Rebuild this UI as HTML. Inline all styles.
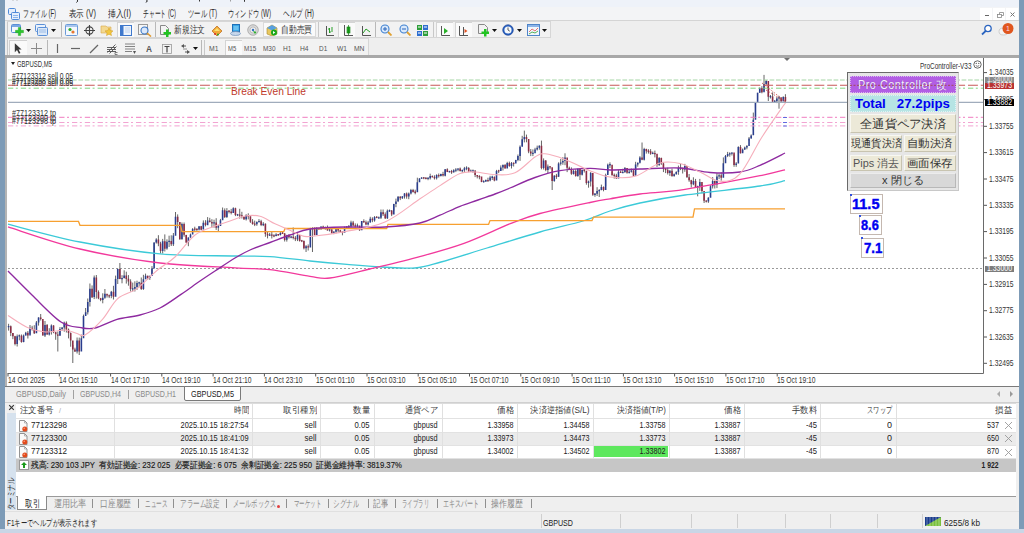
<!DOCTYPE html>
<html><head><meta charset="utf-8">
<style>
*{box-sizing:border-box;margin:0;padding:0}
html,body{width:1024px;height:533px;overflow:hidden;background:#f0f0f0;font-family:"Liberation Sans",sans-serif;color:#222}
body{position:relative}
.a{position:absolute}
.t{position:absolute;white-space:nowrap;line-height:1;transform-origin:0 50%}
#lstrip{left:0;top:0;width:5px;height:533px;background:#7d9bb7}
#rstrip{left:1018.5px;top:0;width:5.5px;height:533px;background:#7d9bb7}
#bstrip{left:0;top:529px;width:1024px;height:4px;background:#c9d6e6}
.m{font-size:10px;color:#2a2a2a}
.tf{font-size:7.5px;color:#555}
.ax{font-size:9px;color:#333}
.tl{font-size:9px;color:#333}
.hd{font-size:9px;color:#3a3a3a}
.cell{font-size:9px;color:#222}
.band{position:absolute;border:1px solid #d6d6d6;background:#f2f2f2}
.sep{position:absolute;width:1px;background:#c4c4c4}
.press{position:absolute;background:#fbfbfb;border:1px solid #e2e2e2}
.btn{position:absolute;background:#ece9d8;border:1px solid #f8f8f2;border-right-color:#c8c4b0;border-bottom-color:#c8c4b0}
.pt{position:absolute;font-size:11px;color:#333;white-space:nowrap;line-height:1;transform-origin:0 50%}
.box{position:absolute;background:#fff;border:1px solid #c4b8b0}
.bt{position:absolute;font-size:14.5px;font-weight:bold;-webkit-text-stroke:0.4px #0000f0;color:#0000f0;line-height:1;white-space:nowrap;transform-origin:0 50%}
</style></head><body>
<!-- title strip -->
<div class="a" style="left:5px;top:0;width:1014px;height:7px;background:#eef2f9"></div>
<svg class="a" style="left:0;top:0" width="260" height="4"><path d="M13 0v1M17 0v1" stroke="#bbb" stroke-width="1"/><path d="M77.5 0v1.5l-1 1M147 0v1.5l-1 1M199.5 0v1.5M244.5 0v1.8" stroke="#333" stroke-width="1"/><path d="M230.5 0v1.5" stroke="#888" stroke-width="0.8"/></svg>
<!-- menu -->
<div class="a" style="left:5px;top:7px;width:1014px;height:13px;background:#f3f4f6"></div>
<div class="a" style="left:5px;top:20px;width:1014px;height:1px;background:#d4d4d4"></div>
<svg class="a" style="left:8px;top:8px" width="12" height="12" viewBox="0 0 12 12"><rect x="0.5" y="0.5" width="7" height="6" rx="1" fill="#e4eefc" stroke="#4f8ad8"/><rect x="3.5" y="4.5" width="8" height="7" rx="1" fill="#e4eefc" stroke="#4f8ad8"/><path d="M5 7.5h5M5 9.5h5" stroke="#8ab4ec"/></svg>
<span class="t m" style="left:23px;top:9px;transform:scaleX(0.594)">ファイル (F)</span>
<span class="t m" style="left:69px;top:9px;transform:scaleX(0.748)">表示 (V)</span>
<span class="t m" style="left:108px;top:9px;transform:scaleX(0.781)">挿入(I)</span>
<span class="t m" style="left:143px;top:9px;transform:scaleX(0.582)">チャート (C)</span>
<span class="t m" style="left:188px;top:9px;transform:scaleX(0.637)">ツール (T)</span>
<span class="t m" style="left:228px;top:9px;transform:scaleX(0.624)">ウィンドウ (W)</span>
<span class="t m" style="left:283px;top:9px;transform:scaleX(0.664)">ヘルプ (H)</span>
<div class="a" style="left:980px;top:8px;width:12px;height:12px;background:#fff"></div>
<div class="a" style="left:993px;top:8px;width:12px;height:12px;background:#fff"></div>
<div class="a" style="left:1006px;top:8px;width:12px;height:12px;background:#fff"></div>
<div class="a" style="left:984.5px;top:14.5px;width:4px;height:1.2px;background:#666"></div>
<svg class="a" style="left:996.5px;top:11.5px" width="7" height="6"><rect x="0.5" y="2.5" width="4" height="3" fill="none" stroke="#888" stroke-width="0.8"/><path d="M2.5 2.5V0.5h4v3h-2" fill="none" stroke="#888" stroke-width="0.8"/></svg>
<svg class="a" style="left:1009.5px;top:11.5px" width="5" height="5"><path d="M0.5 0.5l4 4M4.5 0.5l-4 4" stroke="#777" stroke-width="1"/></svg>
<!-- toolbars -->
<div class="a" style="left:5px;top:21px;width:1014px;height:35px;background:#eeeeee"></div>
<div class="band" style="left:7px;top:21px;width:544px;height:17px"></div>
<div class="band" style="left:7px;top:38px;width:362px;height:18px"></div>
<div class="a" style="left:7px;top:22px;width:1px;height:15px;background:#c8c8c8"></div>
<svg class="a" style="left:11px;top:23px" width="14" height="14" viewBox="0 0 14 14"><rect x="0.5" y="1.5" width="9" height="8" rx="1" fill="#f4f8fd" stroke="#5a8fd6"/><rect x="1" y="2" width="8" height="2" fill="#7aa8e4"/><path d="M7.3 4.5h2.4v2.8h2.8v2.4H9.7v2.8H7.3V9.7H4.5V7.3h2.8z" fill="#2cc62c" stroke="#18a018" stroke-width="0.4"/></svg>
<svg class="a" style="left:26px;top:29px" width="5" height="3" viewBox="0 0 5 3"><path d="M0 0h5l-2.5 3z" fill="#111"/></svg>
<svg class="a" style="left:35px;top:23px" width="14" height="13" viewBox="0 0 14 13"><rect x="0.5" y="1.5" width="10" height="7" rx="1" fill="#eaf2fc" stroke="#5a8fd6"/><rect x="2.5" y="4.5" width="10" height="8" rx="1" fill="#dce9f8" stroke="#5a8fd6"/><path d="M4 7h7M4 9h7" stroke="#9bbbe6"/></svg>
<svg class="a" style="left:51px;top:29px" width="5" height="3" viewBox="0 0 5 3"><path d="M0 0h5l-2.5 3z" fill="#111"/></svg>
<div class="a" style="left:60.5px;top:22px;width:1px;height:15px;background:#b8b8b8"></div>
<svg class="a" style="left:65px;top:24px" width="13" height="12" viewBox="0 0 13 12"><rect x="0.5" y="0.5" width="12" height="11" rx="1" fill="#f4f8fd" stroke="#6a9ad8"/><rect x="1" y="1" width="11" height="2" fill="#a8c6ee"/><circle cx="5" cy="5.5" r="1.6" fill="#2aa82a"/><circle cx="8" cy="8" r="1.6" fill="#e87830"/></svg>
<svg class="a" style="left:84px;top:25px" width="11" height="11" viewBox="0 0 11 11"><circle cx="5.5" cy="5.5" r="3.6" fill="none" stroke="#444" stroke-width="1.1"/><path d="M5.5 0v11M0 5.5h11" stroke="#444" stroke-width="1.1"/></svg>
<svg class="a" style="left:100px;top:24px" width="14" height="12" viewBox="0 0 14 12"><path d="M1 2h5l1 1h4v6H1z" fill="#f3d890" stroke="#d8a848" stroke-width="0.6"/><path d="M9 4l1.2 2.6 2.8.3-2.1 1.9.6 2.8L9 10.2l-2.5 1.4.6-2.8-2.1-1.9 2.8-.3z" fill="#f2c840" stroke="#d09a20" stroke-width="0.5"/></svg>
<div class="a" style="left:117px;top:22px;width:17px;height:15px;background:#fafafa;border-top:1px solid #d4d4d4;border-left:1px solid #d4d4d4"></div>
<svg class="a" style="left:120px;top:25px" width="12" height="11" viewBox="0 0 12 11"><rect x="0.5" y="0.5" width="11" height="10" fill="#eef4fc" stroke="#3f78cc"/><rect x="0.5" y="0.5" width="3" height="10" fill="#3f78cc"/><path d="M5 3h5M5 5h5M5 7h5" stroke="#c0d4f0"/></svg>
<svg class="a" style="left:138px;top:24px" width="14" height="13" viewBox="0 0 14 13"><rect x="0.5" y="0.5" width="9" height="10" fill="#f6f6f6" stroke="#999"/><circle cx="6.5" cy="6.5" r="3.5" fill="#dbe8fa" stroke="#3a78c8" stroke-width="1.1"/><path d="M9 9l4 3.5" stroke="#e09a30" stroke-width="1.6"/></svg>
<div class="a" style="left:154.5px;top:22px;width:1px;height:15px;background:#b8b8b8"></div>
<svg class="a" style="left:160px;top:25px" width="12" height="12" viewBox="0 0 12 12"><path d="M0.5 0.5h5l3 3v6h-8z" fill="#f4f4f4" stroke="#888"/><path d="M6 4.5h2.5v2.5H11v2.5H8.5V12H6V9.5H3.5V7H6z" fill="#22c322"/></svg>
<span class="t m" style="left:174px;top:25px;color:#333;transform:scaleX(0.775)">新規注文</span>
<svg class="a" style="left:211px;top:25px" width="12" height="11" viewBox="0 0 12 11"><path d="M1 6L6 1l5 5-5 5z" fill="#f2a838" stroke="#b86818" stroke-width="0.7"/><path d="M3 6l3-3 3 3" fill="#f8e070"/><circle cx="4" cy="9" r="0.9" fill="#d02020"/><circle cx="7" cy="9.5" r="0.9" fill="#20a020"/></svg>
<svg class="a" style="left:230px;top:24px" width="11" height="12" viewBox="0 0 11 12"><rect x="2.5" y="0.5" width="7" height="7" fill="#38a8e8" stroke="#2070b8"/><path d="M3.5 3h5M3.5 5h5" stroke="#b8e8ff" stroke-width="0.8"/><ellipse cx="5.5" cy="9.5" rx="5" ry="2" fill="#c8d8ec" stroke="#7090b8" stroke-width="0.7"/></svg>
<svg class="a" style="left:247px;top:24px" width="12" height="12" viewBox="0 0 12 12"><circle cx="6" cy="6" r="5.3" fill="#d8d8d8" stroke="#999" stroke-width="0.7"/><circle cx="6" cy="6" r="3" fill="#eee" stroke="#aaa" stroke-width="0.6"/><circle cx="6" cy="6" r="1.2" fill="#3070c0"/><path d="M6 7l2 3 1.5-2z" fill="#28b028"/></svg>
<div class="a" style="left:263px;top:22px;width:53px;height:15px;background:#fafafa;border:1px solid #dadada"></div>
<svg class="a" style="left:266px;top:24px" width="12" height="12" viewBox="0 0 12 12"><path d="M1 4l5-3 5 3v6l-5 2-5-2z" fill="#e8c860" stroke="#a88828" stroke-width="0.6"/><path d="M1 4l5-3 5 3-5 2.5z" fill="#58a0e0"/><circle cx="8" cy="8.5" r="3" fill="#18a818"/><path d="M7 7v3l2.3-1.5z" fill="#fff"/></svg>
<span class="t m" style="left:281px;top:25px;color:#333;transform:scaleX(0.775)">自動売買</span>
<div class="a" style="left:318px;top:22px;width:1px;height:15px;background:#c8c8c8"></div>
<svg class="a" style="left:325px;top:26px" width="9" height="10" viewBox="0 0 9 10"><path d="M1.5 0v9.5H9" stroke="#555" fill="none"/><path d="M4.5 2v5M4.5 3h-1.5M4.5 6h1.5M7 1v5" stroke="#28a028" stroke-width="1"/></svg>
<div class="a" style="left:338px;top:22px;width:17px;height:15px;background:#fafafa;border-top:1px solid #d4d4d4;border-left:1px solid #d4d4d4"></div>
<svg class="a" style="left:343px;top:25px" width="10" height="11" viewBox="0 0 10 11"><path d="M1.5 0v10.5H10" stroke="#555" fill="none"/><rect x="4" y="2" width="3" height="6" fill="#28b028" stroke="#108010" stroke-width="0.6"/><path d="M5.5 0v10" stroke="#108010" stroke-width="0.7"/></svg>
<svg class="a" style="left:361px;top:26px" width="10" height="10" viewBox="0 0 10 10"><path d="M1.5 0v9.5H10" stroke="#555" fill="none"/><path d="M2 7l3-4 4 3" stroke="#28a028" fill="none" stroke-width="1"/></svg>
<div class="a" style="left:375px;top:22px;width:1px;height:15px;background:#b8b8b8"></div>
<svg class="a" style="left:380px;top:24px" width="12" height="12" viewBox="0 0 12 12"><circle cx="5" cy="5" r="4" fill="#d8e8fb" stroke="#3f80d0" stroke-width="1.1"/><path d="M3 5h4M5 3v4" stroke="#2a64b8" stroke-width="1"/><path d="M8 8l3.5 3.5" stroke="#e0a030" stroke-width="1.8"/></svg>
<svg class="a" style="left:399px;top:24px" width="12" height="12" viewBox="0 0 12 12"><circle cx="5" cy="5" r="4" fill="#d8e8fb" stroke="#3f80d0" stroke-width="1.1"/><path d="M3 5h4" stroke="#2a64b8" stroke-width="1"/><path d="M8 8l3.5 3.5" stroke="#e0a030" stroke-width="1.8"/></svg>
<svg class="a" style="left:417px;top:25px" width="11" height="11" viewBox="0 0 11 11"><rect x="0" y="0" width="5" height="5" fill="#2e9e3a"/><rect x="6" y="0" width="5" height="5" fill="#2f6fd0"/><rect x="0" y="6" width="5" height="5" fill="#2f6fd0"/><rect x="6" y="6" width="5" height="5" fill="#2e9e3a"/><path d="M1 2h3M7 2h3M1 8h3M7 8h3" stroke="#fff"/></svg>
<div class="a" style="left:433px;top:22px;width:1px;height:15px;background:#c8c8c8"></div>
<div class="a" style="left:436px;top:22px;width:17px;height:15px;background:#fafafa;border-top:1px solid #d4d4d4;border-left:1px solid #d4d4d4"></div>
<svg class="a" style="left:440px;top:26px" width="10" height="10" viewBox="0 0 10 10"><path d="M1.5 0v9.5H10" stroke="#555" fill="none"/><path d="M4 2v6l4-3z" fill="#28b028"/></svg>
<div class="a" style="left:455px;top:22px;width:17px;height:15px;background:#fafafa;border-top:1px solid #d4d4d4;border-left:1px solid #d4d4d4"></div>
<svg class="a" style="left:458px;top:26px" width="10" height="10" viewBox="0 0 10 10"><path d="M1.5 0v9.5H10M5.5 1v8" stroke="#555" fill="none"/><path d="M6.5 3v4l3-2z" fill="#e05020"/></svg>
<svg class="a" style="left:478px;top:24px" width="13" height="13" viewBox="0 0 13 13"><path d="M0.5 0.5h6l3 3v6h-9z" fill="#f2f2f2" stroke="#888"/><path d="M6 5h2.5v2.5H11V10H8.5v2.5H6V10H3.5V7.5H6z" fill="#22c322"/></svg>
<svg class="a" style="left:492px;top:29px" width="5" height="3" viewBox="0 0 5 3"><path d="M0 0h5l-2.5 3z" fill="#111"/></svg>
<svg class="a" style="left:502px;top:24px" width="12" height="12" viewBox="0 0 12 12"><circle cx="6" cy="6" r="5.3" fill="#2860c0" stroke="#1a4090" stroke-width="0.6"/><circle cx="6" cy="6" r="3.6" fill="#f4f8fc"/><path d="M6 3.5V6l1.8 1.2" stroke="#333" stroke-width="0.8" fill="none"/></svg>
<svg class="a" style="left:517px;top:29px" width="5" height="3" viewBox="0 0 5 3"><path d="M0 0h5l-2.5 3z" fill="#111"/></svg>
<svg class="a" style="left:527px;top:24px" width="13" height="12" viewBox="0 0 13 12"><rect x="0.5" y="0.5" width="12" height="11" fill="#f0f6fc" stroke="#4f84c8"/><rect x="1" y="1" width="11" height="2" fill="#8cb4e8"/><path d="M2 8l3-3 3 2 3-3" stroke="#e05050" fill="none" stroke-width="0.8"/><path d="M2 10l3-2 3 1 3-2" stroke="#30a030" fill="none" stroke-width="0.8"/></svg>
<svg class="a" style="left:542px;top:29px" width="5" height="3" viewBox="0 0 5 3"><path d="M0 0h5l-2.5 3z" fill="#111"/></svg>
<svg class="a" style="left:981px;top:24px" width="12" height="12" viewBox="0 0 12 12"><circle cx="7" cy="4.5" r="3.2" fill="#fff" stroke="#2a64c0" stroke-width="1.3"/><path d="M4.8 6.8L1 10.5" stroke="#2a64c0" stroke-width="1.8"/></svg>
<svg class="a" style="left:998px;top:22px" width="16" height="15" viewBox="0 0 16 15"><ellipse cx="5.5" cy="9.5" rx="4.5" ry="3.5" fill="#f4f4f4" stroke="#c4c4c4" stroke-width="0.8"/><circle cx="10" cy="6.5" r="5.5" fill="#e0561e"/><text x="10" y="9" font-size="7" fill="#fde" text-anchor="middle" font-family="Liberation Sans">1</text></svg>
<div class="a" style="left:7px;top:40px;width:1px;height:15px;background:#c8c8c8"></div>
<div class="a" style="left:9px;top:40px;width:18px;height:15px;background:#fafafa;border-top:1px solid #d0d0d0;border-left:1px solid #d0d0d0"></div>
<svg class="a" style="left:14px;top:43px" width="8" height="11" viewBox="0 0 8 11"><path d="M0.8 0.3v9l2.2-2.2 1.9 3.6 1.5-.8L4.6 6.4H7.6z" fill="#3a3a3a"/></svg>
<svg class="a" style="left:31px;top:43px" width="11" height="11" viewBox="0 0 11 11"><path d="M5.5 0v11M0 5.5h11" stroke="#8a8a8a" stroke-width="1"/></svg>
<div class="a" style="left:46.5px;top:40px;width:1px;height:15px;background:#b8b8b8"></div>
<svg class="a" style="left:56px;top:44px" width="3" height="9" viewBox="0 0 3 9"><path d="M1.5 0v9" stroke="#666" stroke-width="1.2"/></svg>
<svg class="a" style="left:71px;top:47px" width="10" height="3" viewBox="0 0 10 3"><path d="M0 1.5h9" stroke="#666" stroke-width="1.2"/></svg>
<svg class="a" style="left:89px;top:44px" width="10" height="10" viewBox="0 0 10 10"><path d="M1 9L9 1" stroke="#666" stroke-width="1.2"/></svg>
<svg class="a" style="left:106px;top:43px" width="12" height="12" viewBox="0 0 12 12"><path d="M1.5 9.5L9.5 1.5M3.5 10.5l7-7M1 4.5h9M1 6.5h9M1 8.5h9" stroke="#505050" stroke-width="0.9"/><path d="M9 9.5h2.5M9 11.5h2.5M9 9.5v2" stroke="#505050" stroke-width="0.7"/></svg>
<svg class="a" style="left:125px;top:43px" width="11" height="11" viewBox="0 0 11 11"><path d="M0 1h10M0 3.5h10M0 6h10M0 8.5h7" stroke="#777" stroke-width="0.9"/><path d="M8 8h3l-1.5 3z" fill="#555"/></svg>
<span class="t" style="left:145.5px;top:44.5px;font-size:9px;font-weight:bold;color:#555;transform:scaleX(0.923)">A</span>
<svg class="a" style="left:162px;top:43px" width="10" height="11" viewBox="0 0 10 11"><rect x="0.5" y="1.5" width="9" height="9" fill="none" stroke="#999" stroke-width="0.8"/><path d="M2.5 3.5h5M5 3.5v6" stroke="#444" stroke-width="1.2"/></svg>
<svg class="a" style="left:180px;top:44px" width="11" height="10" viewBox="0 0 11 10"><path d="M1 2l3-2v1.4h2v1.2H4V4z" fill="#555"/><path d="M10 8l-3 2V8.6H5V7.4h2V6z" fill="#555"/><path d="M3 5l4 0" stroke="#777" stroke-width="0.8"/></svg>
<svg class="a" style="left:193px;top:47px" width="5" height="3" viewBox="0 0 5 3"><path d="M0 0h5l-2.5 3z" fill="#111"/></svg>
<div class="a" style="left:201px;top:40px;width:1px;height:15px;background:#b8b8b8"></div>
<div class="a" style="left:203.5px;top:40px;width:1px;height:15px;background:#c8c8c8"></div>
<div class="a" style="left:224.5px;top:40px;width:17px;height:15px;background:#fafafa;border-top:1px solid #d4d4d4;border-left:1px solid #d4d4d4"></div>
<span class="t tf" style="left:209px;top:44.5px;transform:scaleX(0.912)">M1</span>
<span class="t tf" style="left:227.8px;top:44.5px;transform:scaleX(0.787)">M5</span>
<span class="t tf" style="left:244.3px;top:44.5px;transform:scaleX(0.843)">M15</span>
<span class="t tf" style="left:262.7px;top:44.5px;transform:scaleX(0.857)">M30</span>
<span class="t tf" style="left:282.6px;top:44.5px;transform:scaleX(0.876)">H1</span>
<span class="t tf" style="left:300px;top:44.5px;transform:scaleX(0.896)">H4</span>
<span class="t tf" style="left:318.8px;top:44.5px;transform:scaleX(0.855)">D1</span>
<span class="t tf" style="left:336.7px;top:44.5px;transform:scaleX(0.889)">W1</span>
<span class="t tf" style="left:353.8px;top:44.5px;transform:scaleX(0.900)">MN</span>
<!-- mdi border -->
<div class="a" style="left:5px;top:55px;width:1014px;height:3px;background:#a8a8a8"></div>
<!-- chart window -->
<div class="a" style="left:5px;top:58px;width:1014px;height:329px;background:#fff"></div>
<div class="a" style="left:5px;top:58px;width:2px;height:329px;background:#b4b4b4"></div>
<div class="a" style="left:5px;top:386px;width:1014px;height:1px;background:#7a7a7a"></div>
<svg class="a" style="left:0;top:0" width="1024" height="533">
<g shape-rendering="crispEdges">
<path d="M8 268.5H984" stroke="#9a9a9a" stroke-width="1" stroke-dasharray="2 2"/>
</g>
<path d="M8.60 323.8V330.6M10.74 325.5V336.1M12.88 333.0V339.2M15.02 335.8V345.4M17.16 334.5V346.5M19.30 334.5V340.3M21.44 334.5V342.7M23.58 334.5V342.3M25.72 331.8V335.5M27.86 331.0V338.5M30.00 325.0V334.0M32.14 325.8V330.5M34.28 325.2V334.0M36.42 321.0V326.5M38.56 317.3V325.6M40.70 314.0V320.5M42.84 321.0V335.5M44.98 321.0V337.0M47.12 324.0V334.8M49.26 328.2V335.5M51.40 324.4V334.6M53.54 325.2V333.2M55.68 331.9V339.8M57.82 331.5V351.5M59.96 327.1V335.5M62.10 327.1V330.8M64.24 321.6V331.7M66.38 321.4V332.5M68.52 328.5V338.4M70.66 332.4V346.7M72.80 345.0V363.0M74.94 347.7V352.0M77.08 337.5V353.5M79.22 337.6V355.0M81.36 334.6V340.0M83.50 314.6V320.0M85.64 308.0V314.5M87.78 298.5V314.5M89.92 283.5V306.5M92.06 285.4V298.0M94.20 275.5V299.1M96.34 275.0V298.6M98.48 290.4V299.2M100.62 297.9V301.2M102.76 293.3V303.3M104.90 289.0V298.8M107.04 294.5V297.6M109.18 294.5V298.1M111.32 290.9V298.2M113.46 285.8V299.5M115.60 275.6V284.5M117.74 268.8V284.0M119.88 263.0V279.2M122.02 275.2V283.3M124.16 270.3V278.5M126.30 271.7V283.6M128.44 275.1V285.7M130.58 279.3V291.5M132.72 282.6V291.5M134.86 281.3V291.5M137.00 280.7V289.9M139.14 281.7V287.3M141.28 277.5V289.9M143.42 274.8V289.9M145.56 273.6V279.4M147.70 275.7V279.6M149.84 275.5V279.9M151.98 266.1V274.5M154.12 242.4V263.5M156.26 238.2V243.6M158.40 235.2V246.2M160.54 241.8V253.5M162.68 238.9V253.5M164.82 234.4V251.5M166.96 239.3V249.7M169.10 235.7V247.0M171.24 235.3V246.0M173.38 233.0V246.0M175.52 212.0V233.0M177.66 214.4V228.2M179.80 222.5V239.7M181.94 222.5V239.5M184.08 222.5V236.7M186.22 234.8V243.0M188.36 237.4V246.2M190.50 233.6V237.8M192.64 228.1V232.1M194.78 226.7V232.1M196.92 228.3V231.1M199.06 226.3V230.5M201.20 225.9V230.3M203.34 220.4V229.3M205.48 220.2V226.4M207.62 217.1V223.5M209.76 217.8V222.5M211.90 219.2V227.6M214.04 219.7V227.7M216.18 218.2V229.9M218.32 225.0V231.1M220.46 218.9V221.8M222.60 207.5V218.0M224.74 208.4V218.0M226.88 208.1V218.0M229.02 210.3V213.4M231.16 208.9V214.4M233.30 207.3V213.0M235.44 207.7V216.1M237.58 213.9V216.1M239.72 208.8V218.6M241.86 211.8V218.5M244.00 216.5V220.0M246.14 214.2V220.5M248.28 213.3V219.4M250.42 216.5V222.9M252.56 219.1V224.7M254.70 220.6V226.1M256.84 221.3V225.8M258.98 219.1V222.3M261.12 219.8V226.1M263.26 222.1V226.1M265.40 223.4V236.8M267.54 231.5V238.4M269.68 232.9V236.0M271.82 232.0V238.5M273.96 234.3V237.2M276.10 233.2V236.3M278.24 234.1V235.7M280.38 232.0V235.5M282.52 231.7V234.0M284.66 233.0V241.5M286.80 234.8V241.6M288.94 234.2V238.6M291.08 236.0V238.3M293.22 227.5V239.4M295.36 236.1V241.1M297.50 232.9V241.1M299.64 235.5V241.6M301.78 239.9V242.1M303.92 240.4V249.4M306.06 245.1V252.0M308.20 244.4V250.5M310.34 227.8V236.5M312.48 227.3V252.0M314.62 227.3V235.4M316.76 227.1V231.1M318.90 227.8V229.5M321.04 226.5V230.0M323.18 225.7V228.6M325.32 226.6V229.7M327.46 225.5V230.6M329.60 228.5V231.5M331.74 228.8V233.9M333.88 231.0V234.2M336.02 228.5V233.4M338.16 228.3V232.3M340.30 229.8V232.3M342.44 231.6V235.3M344.58 226.6V228.5M346.72 226.0V228.4M348.86 225.0V228.2M351.00 220.7V227.5M353.14 220.9V226.4M355.28 223.4V227.5M357.42 223.6V227.4M359.56 226.5V230.8M361.70 221.0V225.5M363.84 219.3V222.9M365.98 220.5V225.3M368.12 220.9V225.5M370.26 216.8V222.5M372.40 217.3V222.2M374.54 216.1V221.7M376.68 216.1V218.2M378.82 216.5V218.7M380.96 209.5V219.0M383.10 209.5V216.0M385.24 212.4V219.0M387.38 209.5V219.0M389.52 209.5V211.9M391.66 210.1V216.1M393.80 203.8V210.5M395.94 198.6V207.2M398.08 196.1V202.1M400.22 196.1V200.1M402.36 196.3V198.9M404.50 193.1V198.6M406.64 192.5V198.7M408.78 192.5V199.2M410.92 188.9V194.5M413.06 188.9V192.6M415.20 189.7V194.3M417.34 177.7V189.9M419.48 178.2V180.5M421.62 177.2V178.8M423.76 177.1V179.2M425.90 177.1V179.4M428.04 177.2V180.2M430.18 173.7V179.5M432.32 175.4V177.5M434.46 175.3V179.5M436.60 174.3V179.5M438.74 173.5V177.6M440.88 173.7V176.5M443.02 171.8V176.5M445.16 169.1V176.4M447.30 168.3V172.1M449.44 170.8V172.5M451.58 169.9V173.9M453.72 169.2V172.7M455.86 168.1V172.1M458.00 168.3V171.2M460.14 167.5V171.5M462.28 169.5V172.7M464.42 166.9V172.2M466.56 166.3V170.3M468.70 167.1V172.2M470.84 169.5V172.0M472.98 169.5V172.8M475.12 170.0V177.1M477.26 175.2V178.4M479.40 175.2V179.3M481.54 179.5V182.2M483.68 180.2V182.6M485.82 179.5V182.0M487.96 177.7V181.8M490.10 175.8V181.3M492.24 175.7V180.0M494.38 176.3V181.3M496.52 169.9V176.2M498.66 169.8V173.1M500.80 165.4V170.5M502.94 164.4V170.5M505.08 164.0V168.5M507.22 161.8V166.8M509.36 161.6V166.8M511.50 162.0V168.5M513.64 162.5V166.5M515.78 159.8V161.2M517.92 154.5V161.2M520.06 145.4V160.9M522.20 135.8V146.1M524.34 130.6V142.4M526.48 134.6V142.3M528.62 143.3V153.2M530.76 149.0V156.1M532.90 149.4V156.1M535.04 147.8V150.5M537.18 145.6V150.5M539.32 145.3V149.7M541.46 140.6V169.3M543.60 158.4V169.5M545.74 160.1V171.2M547.88 164.5V173.1M550.02 166.0V169.3M552.16 173.9V190.0M554.30 175.1V181.8M556.44 173.9V178.9M558.58 162.3V176.8M560.72 158.9V165.5M562.86 157.2V164.8M565.00 153.3V165.2M567.14 162.5V172.1M569.28 166.6V169.7M571.42 167.4V174.8M573.56 169.6V174.6M575.70 169.2V176.7M577.84 168.3V176.8M579.98 168.3V180.0M582.12 169.7V175.5M584.26 168.3V172.5M586.40 172.0V184.7M588.54 180.6V187.7M590.68 172.0V186.5M592.82 185.2V195.9M594.96 193.2V196.8M597.10 187.2V196.0M599.24 189.1V197.0M601.38 184.6V190.3M603.52 186.4V191.3M605.66 173.7V186.2M607.80 163.6V172.5M609.94 162.3V168.0M612.08 172.0V175.5M614.22 173.5V178.6M616.36 173.8V178.6M618.50 169.8V176.8M620.64 170.5V173.0M622.78 168.8V173.0M624.92 167.0V173.0M627.06 168.3V173.7M629.20 169.9V173.6M631.34 168.5V172.6M633.48 168.9V176.8M635.62 161.8V171.2M637.76 162.5V166.7M639.90 156.2V163.5M642.04 142.5V160.2M644.18 147.8V160.5M646.32 148.7V153.6M648.46 149.2V153.6M650.60 149.1V154.8M652.74 151.5V154.2M654.88 150.6V157.4M657.02 157.0V166.9M659.16 157.0V166.0M661.30 157.6V164.9M663.44 162.5V172.1M665.58 168.1V173.1M667.72 167.7V174.5M669.86 170.1V175.9M672.00 168.6V176.8M674.14 173.5V176.8M676.28 171.2V174.6M678.42 165.6V174.8M680.56 163.9V170.1M682.70 167.7V173.5M684.84 163.9V171.8M686.98 171.5V178.0M689.12 174.0V181.8M691.26 179.8V187.5M693.40 177.3V185.2M695.54 178.9V187.7M697.68 185.7V196.3M699.82 178.9V190.9M701.96 184.5V193.3M704.10 192.0V203.0M706.24 200.3V202.5M708.38 197.2V202.9M710.52 185.1V194.9M712.66 177.1V188.5M714.80 180.6V188.5M716.94 173.3V188.1M719.08 173.7V179.1M721.22 172.3V180.7M723.36 157.4V172.5M725.50 155.0V157.5M727.64 151.9V157.1M729.78 152.3V156.7M731.92 152.4V155.5M734.06 154.5V166.8M736.20 162.1V166.8M738.34 146.3V161.2M740.48 145.1V153.5M742.62 148.5V151.8M744.76 146.6V150.0M746.90 145.1V149.3M749.04 137.0V140.5M751.18 134.4V138.5M753.32 112.6V130.3M755.46 102.0V107.8M757.60 92.8V93.7M759.74 87.4V92.9M761.88 86.2V93.3M764.02 74.9V90.9M766.16 80.0V85.0M768.30 89.9V101.0M770.44 95.0V98.5M772.58 92.4V102.6M774.72 100.0V102.8M776.86 96.9V103.1M779.00 95.9V108.7M781.14 97.3V101.7M783.28 96.3V99.3M785.42 94.2V101.9" stroke="#555" stroke-width="0.9" fill="none"/>
<path d="M7.80 325.9h1.6v1.3h-1.6zM16.36 336.2h1.6v7.8h-1.6zM18.50 335.3h1.6v1.3h-1.6zM22.78 335.4h1.6v6.7h-1.6zM24.92 332.7h1.6v2.8h-1.6zM29.20 327.7h1.6v7.7h-1.6zM35.62 322.4h1.6v10.8h-1.6zM37.76 317.6h1.6v4.8h-1.6zM44.18 324.9h1.6v10.7h-1.6zM48.46 331.0h1.6v3.5h-1.6zM50.60 325.6h1.6v5.4h-1.6zM59.16 329.0h1.6v6.7h-1.6zM61.30 327.6h1.6v1.4h-1.6zM63.44 322.7h1.6v4.9h-1.6zM76.28 340.5h1.6v11.1h-1.6zM80.56 338.2h1.6v13.3h-1.6zM82.70 316.1h1.6v22.1h-1.6zM84.84 312.3h1.6v3.8h-1.6zM86.98 302.1h1.6v10.2h-1.6zM89.12 288.7h1.6v13.4h-1.6zM93.40 277.4h1.6v19.7h-1.6zM101.96 297.7h1.6v2.3h-1.6zM104.10 293.8h1.6v4.0h-1.6zM110.52 291.7h1.6v4.4h-1.6zM114.80 278.9h1.6v17.9h-1.6zM116.94 268.9h1.6v10.0h-1.6zM121.22 277.9h1.6v1.3h-1.6zM123.36 275.6h1.6v2.5h-1.6zM131.92 288.3h1.6v1.3h-1.6zM134.06 286.9h1.6v1.9h-1.6zM136.20 283.0h1.6v3.9h-1.6zM138.34 282.2h1.6v1.3h-1.6zM142.62 279.2h1.6v9.7h-1.6zM144.76 275.8h1.6v3.3h-1.6zM149.04 276.1h1.6v1.9h-1.6zM151.18 268.5h1.6v7.6h-1.6zM153.32 242.5h1.6v26.0h-1.6zM155.46 239.5h1.6v3.0h-1.6zM161.88 241.2h1.6v9.9h-1.6zM166.16 241.7h1.6v6.9h-1.6zM168.30 240.7h1.6v1.3h-1.6zM172.58 235.6h1.6v8.7h-1.6zM174.72 216.7h1.6v19.0h-1.6zM181.14 223.9h1.6v15.4h-1.6zM187.56 237.5h1.6v4.8h-1.6zM189.70 234.4h1.6v3.1h-1.6zM191.84 229.1h1.6v5.3h-1.6zM198.26 226.3h1.6v3.2h-1.6zM202.54 222.7h1.6v6.9h-1.6zM206.82 220.6h1.6v4.6h-1.6zM213.24 222.3h1.6v1.3h-1.6zM217.52 225.9h1.6v1.8h-1.6zM219.66 220.2h1.6v5.8h-1.6zM221.80 210.2h1.6v10.0h-1.6zM226.08 211.1h1.6v5.9h-1.6zM232.50 208.3h1.6v4.6h-1.6zM236.78 214.3h1.6v1.3h-1.6zM245.34 215.3h1.6v4.0h-1.6zM256.04 221.9h1.6v2.3h-1.6zM258.18 221.0h1.6v1.3h-1.6zM262.46 223.8h1.6v1.4h-1.6zM268.88 234.4h1.6v1.3h-1.6zM275.30 234.4h1.6v1.7h-1.6zM279.58 233.0h1.6v2.1h-1.6zM286.00 235.5h1.6v4.3h-1.6zM290.28 236.4h1.6v1.3h-1.6zM296.70 234.9h1.6v4.5h-1.6zM305.26 246.3h1.6v2.0h-1.6zM309.54 229.0h1.6v18.6h-1.6zM311.68 227.9h1.6v1.3h-1.6zM315.96 228.3h1.6v6.8h-1.6zM320.24 226.6h1.6v2.5h-1.6zM324.52 226.9h1.6v1.4h-1.6zM328.80 229.3h1.6v1.3h-1.6zM333.08 231.8h1.6v1.3h-1.6zM335.22 229.2h1.6v2.6h-1.6zM343.78 227.4h1.6v5.3h-1.6zM345.92 226.5h1.6v1.3h-1.6zM348.06 226.0h1.6v1.3h-1.6zM350.20 222.6h1.6v3.9h-1.6zM356.62 225.2h1.6v1.3h-1.6zM360.90 221.0h1.6v9.2h-1.6zM367.32 222.4h1.6v2.0h-1.6zM369.46 218.7h1.6v3.7h-1.6zM373.74 216.9h1.6v3.5h-1.6zM378.02 217.2h1.6v1.3h-1.6zM380.16 212.2h1.6v5.5h-1.6zM386.58 210.8h1.6v7.4h-1.6zM388.72 210.1h1.6v1.3h-1.6zM393.00 204.1h1.6v10.4h-1.6zM395.14 201.4h1.6v2.7h-1.6zM397.28 196.8h1.6v4.5h-1.6zM401.56 196.3h1.6v1.9h-1.6zM403.70 193.6h1.6v2.8h-1.6zM407.98 193.6h1.6v2.8h-1.6zM410.12 189.9h1.6v3.7h-1.6zM416.54 182.3h1.6v10.0h-1.6zM418.68 178.4h1.6v3.9h-1.6zM420.82 177.5h1.6v1.3h-1.6zM427.24 177.8h1.6v1.3h-1.6zM429.38 175.9h1.6v2.4h-1.6zM435.80 174.9h1.6v3.3h-1.6zM440.08 174.1h1.6v2.0h-1.6zM444.36 169.3h1.6v6.4h-1.6zM448.64 171.0h1.6v1.3h-1.6zM452.92 170.3h1.6v1.9h-1.6zM455.06 169.4h1.6v1.3h-1.6zM457.20 168.5h1.6v1.3h-1.6zM461.48 170.0h1.6v1.3h-1.6zM463.62 168.3h1.6v1.9h-1.6zM465.76 167.5h1.6v1.3h-1.6zM470.04 170.5h1.6v1.3h-1.6zM472.18 170.2h1.6v1.3h-1.6zM482.88 180.9h1.6v1.3h-1.6zM485.02 180.1h1.6v1.3h-1.6zM489.30 177.6h1.6v3.0h-1.6zM491.44 176.6h1.6v1.3h-1.6zM495.72 170.9h1.6v9.6h-1.6zM500.00 167.6h1.6v3.5h-1.6zM502.14 165.1h1.6v2.5h-1.6zM506.42 163.1h1.6v5.4h-1.6zM510.70 163.3h1.6v2.6h-1.6zM514.98 160.0h1.6v3.5h-1.6zM517.12 155.9h1.6v4.1h-1.6zM519.26 146.8h1.6v9.1h-1.6zM521.40 139.3h1.6v7.5h-1.6zM523.54 137.0h1.6v2.3h-1.6zM532.10 152.7h1.6v1.3h-1.6zM534.24 149.5h1.6v3.7h-1.6zM536.38 147.7h1.6v1.8h-1.6zM538.52 145.7h1.6v2.1h-1.6zM542.80 160.4h1.6v7.7h-1.6zM547.08 166.5h1.6v3.5h-1.6zM553.50 175.8h1.6v5.1h-1.6zM557.78 163.4h1.6v13.3h-1.6zM559.92 162.4h1.6v1.3h-1.6zM562.06 161.0h1.6v1.6h-1.6zM564.20 157.4h1.6v3.6h-1.6zM572.76 170.9h1.6v3.0h-1.6zM577.04 169.1h1.6v7.0h-1.6zM581.32 170.1h1.6v4.6h-1.6zM587.74 181.5h1.6v1.6h-1.6zM589.88 172.9h1.6v8.6h-1.6zM594.16 193.6h1.6v1.3h-1.6zM596.30 191.0h1.6v2.7h-1.6zM598.44 189.9h1.6v1.3h-1.6zM600.58 187.0h1.6v3.1h-1.6zM604.86 174.9h1.6v15.0h-1.6zM607.00 164.7h1.6v10.2h-1.6zM609.14 164.1h1.6v1.3h-1.6zM617.70 171.7h1.6v6.9h-1.6zM621.98 171.9h1.6v1.3h-1.6zM624.12 168.1h1.6v4.0h-1.6zM628.40 171.7h1.6v1.3h-1.6zM630.54 170.4h1.6v1.4h-1.6zM634.82 164.5h1.6v11.2h-1.6zM636.96 162.8h1.6v1.7h-1.6zM639.10 157.4h1.6v5.4h-1.6zM643.38 148.9h1.6v10.8h-1.6zM651.94 152.8h1.6v1.3h-1.6zM658.36 157.9h1.6v7.0h-1.6zM669.06 170.7h1.6v2.4h-1.6zM673.34 174.3h1.6v1.6h-1.6zM675.48 172.0h1.6v2.2h-1.6zM677.62 167.9h1.6v4.1h-1.6zM684.04 166.1h1.6v3.5h-1.6zM692.60 180.9h1.6v3.4h-1.6zM696.88 186.1h1.6v1.3h-1.6zM699.02 182.0h1.6v4.6h-1.6zM707.58 197.8h1.6v3.6h-1.6zM709.72 186.3h1.6v11.5h-1.6zM711.86 180.9h1.6v5.4h-1.6zM716.14 176.5h1.6v8.0h-1.6zM718.28 175.3h1.6v1.3h-1.6zM722.56 163.3h1.6v14.4h-1.6zM724.70 155.9h1.6v7.4h-1.6zM726.84 154.1h1.6v1.8h-1.6zM728.98 153.3h1.6v1.3h-1.6zM731.12 152.5h1.6v1.3h-1.6zM735.40 163.4h1.6v1.6h-1.6zM737.54 147.0h1.6v16.4h-1.6zM741.82 149.5h1.6v3.7h-1.6zM743.96 147.4h1.6v2.1h-1.6zM746.10 146.1h1.6v1.3h-1.6zM748.24 138.4h1.6v7.7h-1.6zM750.38 135.4h1.6v3.0h-1.6zM752.52 119.8h1.6v15.5h-1.6zM754.66 102.9h1.6v16.9h-1.6zM756.80 92.8h1.6v10.1h-1.6zM758.94 88.2h1.6v4.6h-1.6zM763.22 84.1h1.6v8.2h-1.6zM765.36 81.0h1.6v3.1h-1.6zM769.64 95.9h1.6v1.3h-1.6zM773.92 100.8h1.6v1.3h-1.6zM776.06 98.5h1.6v2.7h-1.6zM778.20 97.3h1.6v1.3h-1.6zM782.48 97.0h1.6v4.4h-1.6z" fill="#2a3e8e"/>
<path d="M9.94 326.3h1.6v6.7h-1.6zM12.08 333.0h1.6v3.2h-1.6zM14.22 336.2h1.6v7.8h-1.6zM20.64 335.7h1.6v6.4h-1.6zM27.06 332.7h1.6v2.7h-1.6zM31.34 327.7h1.6v1.6h-1.6zM33.48 329.4h1.6v3.8h-1.6zM39.90 317.6h1.6v1.3h-1.6zM42.04 318.9h1.6v16.7h-1.6zM46.32 324.9h1.6v9.7h-1.6zM52.74 325.6h1.6v6.7h-1.6zM54.88 332.3h1.6v2.0h-1.6zM57.02 334.4h1.6v1.4h-1.6zM65.58 322.7h1.6v6.7h-1.6zM67.72 329.5h1.6v3.6h-1.6zM69.86 333.1h1.6v7.4h-1.6zM72.00 340.4h1.6v9.2h-1.6zM74.14 349.6h1.6v2.0h-1.6zM78.42 340.5h1.6v10.9h-1.6zM91.26 288.7h1.6v8.5h-1.6zM95.54 277.4h1.6v14.5h-1.6zM97.68 292.0h1.6v6.3h-1.6zM99.82 298.3h1.6v1.8h-1.6zM106.24 293.8h1.6v1.8h-1.6zM108.38 295.2h1.6v1.3h-1.6zM112.66 291.7h1.6v5.1h-1.6zM119.08 268.9h1.6v10.1h-1.6zM125.50 275.6h1.6v3.3h-1.6zM127.64 278.8h1.6v2.7h-1.6zM129.78 281.6h1.6v7.5h-1.6zM140.48 282.7h1.6v6.2h-1.6zM146.90 275.8h1.6v2.2h-1.6zM157.60 239.5h1.6v4.0h-1.6zM159.74 243.6h1.6v7.5h-1.6zM164.02 241.2h1.6v7.5h-1.6zM170.44 240.9h1.6v3.4h-1.6zM176.86 216.7h1.6v5.4h-1.6zM179.00 222.1h1.6v17.2h-1.6zM183.28 223.9h1.6v10.9h-1.6zM185.42 234.9h1.6v7.5h-1.6zM193.98 228.5h1.6v1.3h-1.6zM196.12 228.7h1.6v1.3h-1.6zM200.40 226.3h1.6v3.4h-1.6zM204.68 222.7h1.6v2.4h-1.6zM208.96 220.6h1.6v1.5h-1.6zM211.10 222.0h1.6v1.5h-1.6zM215.38 222.5h1.6v5.2h-1.6zM223.94 210.2h1.6v6.9h-1.6zM228.22 210.6h1.6v1.3h-1.6zM230.36 211.4h1.6v1.5h-1.6zM234.64 208.3h1.6v6.7h-1.6zM238.92 214.4h1.6v1.3h-1.6zM241.06 215.2h1.6v1.6h-1.6zM243.20 216.8h1.6v2.5h-1.6zM247.48 215.1h1.6v1.3h-1.6zM249.62 216.3h1.6v5.5h-1.6zM251.76 221.8h1.6v2.3h-1.6zM253.90 223.5h1.6v1.3h-1.6zM260.32 221.3h1.6v3.8h-1.6zM264.60 223.8h1.6v10.3h-1.6zM266.74 234.0h1.6v1.6h-1.6zM271.02 234.4h1.6v1.3h-1.6zM273.16 235.3h1.6v1.3h-1.6zM277.44 234.1h1.6v1.3h-1.6zM281.72 232.6h1.6v1.3h-1.6zM283.86 233.5h1.6v6.4h-1.6zM288.14 235.5h1.6v1.7h-1.6zM292.42 236.7h1.6v1.3h-1.6zM294.56 237.7h1.6v1.6h-1.6zM298.84 234.9h1.6v6.1h-1.6zM300.98 240.3h1.6v1.3h-1.6zM303.12 241.0h1.6v7.2h-1.6zM307.40 246.3h1.6v1.3h-1.6zM313.82 228.1h1.6v7.0h-1.6zM318.10 228.1h1.6v1.3h-1.6zM322.38 226.6h1.6v1.8h-1.6zM326.66 226.9h1.6v3.5h-1.6zM330.94 229.5h1.6v3.6h-1.6zM337.36 229.1h1.6v1.3h-1.6zM339.50 230.3h1.6v1.6h-1.6zM341.64 231.6h1.6v1.3h-1.6zM352.34 222.6h1.6v3.0h-1.6zM354.48 225.3h1.6v1.3h-1.6zM358.76 225.5h1.6v4.7h-1.6zM363.04 221.0h1.6v1.3h-1.6zM365.18 222.2h1.6v2.2h-1.6zM371.60 218.7h1.6v1.6h-1.6zM375.88 216.8h1.6v1.3h-1.6zM382.30 212.2h1.6v2.1h-1.6zM384.44 214.3h1.6v3.9h-1.6zM390.86 210.6h1.6v3.8h-1.6zM399.42 196.8h1.6v1.4h-1.6zM405.84 193.6h1.6v2.8h-1.6zM412.26 189.9h1.6v2.1h-1.6zM414.40 191.6h1.6v1.3h-1.6zM422.96 177.3h1.6v1.3h-1.6zM425.10 177.7h1.6v1.3h-1.6zM431.52 175.9h1.6v1.3h-1.6zM433.66 177.0h1.6v1.3h-1.6zM437.94 174.9h1.6v1.3h-1.6zM442.22 174.1h1.6v1.5h-1.6zM446.50 169.3h1.6v2.6h-1.6zM450.78 171.1h1.6v1.3h-1.6zM459.34 168.5h1.6v2.6h-1.6zM467.90 168.0h1.6v3.4h-1.6zM474.32 170.8h1.6v4.3h-1.6zM476.46 175.1h1.6v1.4h-1.6zM478.60 175.9h1.6v1.3h-1.6zM480.74 176.6h1.6v5.5h-1.6zM487.16 179.9h1.6v1.3h-1.6zM493.58 176.9h1.6v3.6h-1.6zM497.86 170.3h1.6v1.3h-1.6zM504.28 165.1h1.6v3.4h-1.6zM508.56 163.1h1.6v2.8h-1.6zM512.84 162.8h1.6v1.3h-1.6zM525.68 137.0h1.6v1.9h-1.6zM527.82 139.0h1.6v12.6h-1.6zM529.96 151.6h1.6v1.9h-1.6zM540.66 145.7h1.6v22.4h-1.6zM544.94 160.4h1.6v9.6h-1.6zM549.22 166.2h1.6v1.3h-1.6zM551.36 167.2h1.6v13.7h-1.6zM555.64 175.6h1.6v1.3h-1.6zM566.34 157.4h1.6v10.3h-1.6zM568.48 167.7h1.6v1.8h-1.6zM570.62 169.4h1.6v4.4h-1.6zM574.90 170.9h1.6v5.1h-1.6zM579.18 169.1h1.6v5.6h-1.6zM583.46 169.8h1.6v1.3h-1.6zM585.60 170.8h1.6v12.3h-1.6zM592.02 172.9h1.6v21.9h-1.6zM602.72 187.0h1.6v2.9h-1.6zM611.28 164.7h1.6v10.6h-1.6zM613.42 174.7h1.6v1.3h-1.6zM615.56 175.5h1.6v3.1h-1.6zM619.84 171.7h1.6v1.3h-1.6zM626.26 168.1h1.6v4.7h-1.6zM632.68 170.4h1.6v5.3h-1.6zM641.24 157.4h1.6v2.3h-1.6zM645.52 148.9h1.6v2.3h-1.6zM647.66 150.6h1.6v1.3h-1.6zM649.80 151.3h1.6v2.5h-1.6zM654.08 152.9h1.6v1.3h-1.6zM656.22 153.8h1.6v11.1h-1.6zM660.50 157.9h1.6v5.7h-1.6zM662.64 163.6h1.6v5.2h-1.6zM664.78 168.7h1.6v1.3h-1.6zM666.92 169.9h1.6v3.2h-1.6zM671.20 170.7h1.6v5.2h-1.6zM679.76 167.4h1.6v1.3h-1.6zM681.90 168.2h1.6v1.4h-1.6zM686.18 166.1h1.6v11.0h-1.6zM688.32 177.2h1.6v3.1h-1.6zM690.46 180.3h1.6v4.0h-1.6zM694.74 180.9h1.6v6.0h-1.6zM701.16 182.0h1.6v9.1h-1.6zM703.30 191.1h1.6v9.6h-1.6zM705.44 200.4h1.6v1.3h-1.6zM714.00 180.9h1.6v3.7h-1.6zM720.42 175.3h1.6v2.4h-1.6zM733.26 152.5h1.6v12.4h-1.6zM739.68 147.0h1.6v6.2h-1.6zM761.08 88.2h1.6v4.1h-1.6zM767.50 81.0h1.6v15.7h-1.6zM771.78 96.4h1.6v5.4h-1.6zM780.34 97.4h1.6v4.1h-1.6zM784.62 97.0h1.6v4.3h-1.6z" fill="#8c2c44"/>
<path d="M8 224.2C20.0 227.2 54.7 237.1 80 242C105.3 246.9 134.2 251.5 160 253.8C185.8 256.1 216.7 255.5 235 256C253.3 256.5 257.5 255.8 270 256.6C282.5 257.4 297.2 259.7 310 261C322.8 262.3 335.0 263.4 347 264.4C359.0 265.4 370.7 266.4 382 267C393.3 267.6 405.2 268.8 415 268C424.8 267.2 429.0 265.3 441 262C453.0 258.7 470.5 253.0 487 248C503.5 243.0 524.0 236.5 540 232C556.0 227.5 571.3 224.5 583 221C594.7 217.5 600.5 214.0 610 211C619.5 208.0 627.5 205.7 640 203C652.5 200.3 665.0 197.8 685 195C705.0 192.2 743.3 188.4 760 186C776.7 183.6 780.8 181.5 785 180.6" fill="none" stroke="#3ccad8" stroke-width="1.3"/>
<path d="M8 226.9C20.0 230.6 54.7 243.0 80 249C105.3 255.0 134.2 259.9 160 263C185.8 266.1 216.7 266.7 235 267.8C253.3 268.9 257.5 268.3 270 269.7C282.5 271.1 300.0 274.9 310 276.3C320.0 277.7 320.0 279.2 330 278C340.0 276.8 355.5 272.4 370 269C384.5 265.6 401.3 261.7 417 257.4C432.7 253.1 448.3 249.1 464 243.4C479.7 237.7 498.3 228.4 511 223.4C523.7 218.4 526.8 217.0 540 213.5C553.2 210.0 578.3 204.9 590 202.5C601.7 200.1 601.7 200.2 610 198.8C618.3 197.4 627.5 195.6 640 194C652.5 192.4 665.0 192.5 685 189.4C705.0 186.3 743.3 179.0 760 175.7C776.7 172.4 780.8 170.8 785 169.8" fill="none" stroke="#f2399c" stroke-width="1.3"/>
<path d="M8 221.4H78.5L80 225.3H180.6L182 231.6H283.8L285 228.5H386.7L388 224.3H488.6L490 220.6H592L593.5 217.2H693L694.5 208.9H785" fill="none" stroke="#f7a030" stroke-width="1.3"/>
<path d="M8 271C12.0 275.0 23.2 286.5 32 295C40.8 303.5 52.8 316.6 61 322C69.2 327.4 75.3 326.7 81 327.7C86.7 328.7 89.0 329.4 95 328C101.0 326.6 109.5 321.6 117 319.4C124.5 317.2 132.8 316.9 140 315C147.2 313.1 153.2 311.4 160 308C166.8 304.6 174.3 298.9 181 294.4C187.7 289.9 194.3 284.9 200 281C205.7 277.1 209.2 274.8 215 271C220.8 267.2 229.2 261.5 235 258C240.8 254.5 244.2 252.6 250 250C255.8 247.4 263.3 245.0 270 242.5C276.7 240.0 283.3 237.2 290 235C296.7 232.8 300.8 230.3 310 229C319.2 227.7 332.5 227.3 345 227C357.5 226.7 372.5 227.7 385 227C397.5 226.3 410.8 225.0 420 223C429.2 221.0 433.3 218.0 440 215.2C446.7 212.4 453.7 208.8 460 206.3C466.3 203.8 472.2 202.1 478 200C483.8 197.9 489.7 196.0 495 194C500.3 192.0 503.3 190.8 510 188C516.7 185.2 526.7 180.4 535 177.5C543.3 174.6 550.8 172.2 560 170.7C569.2 169.2 581.7 168.5 590 168.4C598.3 168.3 601.7 169.9 610 170C618.3 170.1 628.3 169.3 640 169C651.7 168.7 668.3 167.4 680 168C691.7 168.6 700.0 171.8 710 172.5C720.0 173.2 731.7 173.2 740 172C748.3 170.8 752.5 168.5 760 165.3C767.5 162.1 780.8 155.1 785 153" fill="none" stroke="#8e2aa0" stroke-width="1.35"/>
<path d="M8 315.5C11.2 317.5 21.2 324.8 27.5 327.5C33.8 330.2 39.2 331.6 45.5 332C51.8 332.4 59.8 329.8 65 330C70.2 330.2 73.7 332.7 77 333.5C80.3 334.3 80.8 337.4 85 335C89.2 332.6 97.1 325.4 102.5 319.4C107.9 313.4 111.9 303.8 117.5 298.8C123.1 293.8 130.5 293.1 136 289.4C141.5 285.6 146.4 279.9 150.4 276.3C154.4 272.7 155.9 271.2 160 268C164.1 264.8 169.2 262.5 175 257C180.8 251.5 188.3 240.2 195 235C201.7 229.8 209.2 228.3 215 226C220.8 223.7 225.0 222.7 230 221C235.0 219.3 240.0 216.8 245 216C250.0 215.2 255.0 215.0 260 216.3C265.0 217.6 270.0 221.5 275 223.8C280.0 226.1 285.8 228.4 290 230.3C294.2 232.2 296.7 234.0 300 235C303.3 236.0 302.5 237.1 310 236.5C317.5 235.9 332.5 234.0 345 231.6C357.5 229.2 372.5 227.5 385 222C397.5 216.5 410.8 204.9 420 198.8C429.2 192.7 433.3 189.8 440 185.6C446.7 181.4 454.2 175.8 460 173.5C465.8 171.2 469.2 171.8 475 172C480.8 172.2 488.3 174.6 495 174.7C501.7 174.8 508.3 175.8 515 172.8C521.7 169.9 530.0 160.2 535 157C540.0 153.8 540.0 153.4 545 153.8C550.0 154.2 557.5 156.6 565 159.4C572.5 162.2 582.5 167.8 590 170.7C597.5 173.6 602.5 176.1 610 177C617.5 177.9 626.7 178.6 635 176.3C643.3 174.0 652.5 165.1 660 163C667.5 160.9 673.3 162.0 680 163.5C686.7 165.0 693.3 169.0 700 172C706.7 175.0 713.3 181.0 720 181.3C726.7 181.6 733.0 181.2 740 173.8C747.0 166.4 754.3 149.0 762 137C769.7 125.0 782.0 107.8 786 102" fill="none" stroke="#f6aebb" stroke-width="1.1"/>
<g>
<path d="M8 80H984" stroke="#a4d4a4" stroke-width="1" stroke-dasharray="4.7 1.7"/>
<path d="M8 85.3H984" stroke="#c85858" stroke-width="1.1" stroke-dasharray="9.9 2.9"/>
<path d="M8 88.2H984" stroke="#7ed47e" stroke-width="1" stroke-dasharray="5.3 2.5 2 3"/>
<path d="M8 102.4H984" stroke="#a0acbc" stroke-width="1.2"/>
<path d="M8 117.3H984" stroke="#f07cc0" stroke-width="1" stroke-dasharray="5.3 2.5 2 3"/>
<path d="M8 122.5H984" stroke="#f2a4d2" stroke-width="1" stroke-dasharray="5.3 2.5 2 3"/>
<path d="M8 125.9H984" stroke="#f2a4d2" stroke-width="1" stroke-dasharray="5.3 2.5 2 3"/>
<path d="M783 117.5h4M783 122.5h4M783 126h4" stroke="#5060e0" stroke-width="0.9"/>
<path d="M762 83L786 102M766 90L786 102" stroke="#c84040" stroke-width="0.8" stroke-dasharray="1.5 1.5" fill="none"/>
<path d="M983.5 58V373.5H7.5" stroke="#6a6a6a" stroke-width="1" fill="none"/>
<path d="M784 58l3 3 3-3z" fill="#707070"/>
<path d="M11 62h4l-2 3z" fill="#222"/>
</g>
<path d="M984 99.6h3M984 72.6h3M984 126.3h3M984 152.6h3M984 179.0h3M984 205.3h3M984 231.6h3M984 258.0h3M984 284.4h3M984 310.7h3M984 337.0h3M984 363.3h3M8.0 373.5v3M59.3 373.5v3M110.6 373.5v3M161.8 373.5v3M213.1 373.5v3M264.4 373.5v3M315.7 373.5v3M367.0 373.5v3M418.2 373.5v3M469.5 373.5v3M520.8 373.5v3M572.1 373.5v3M623.4 373.5v3M674.6 373.5v3M725.9 373.5v3M777.2 373.5v3" stroke="#555" stroke-width="1"/>
</svg>
<span class="t tl" style="left:17px;top:60px;transform:scaleX(0.660)">GBPUSD,M5</span>
<span class="t tl" style="left:12px;top:72px;transform:scaleX(0.752)">#77123312 sell 0.05</span>
<span class="t tl" style="left:12px;top:77px;transform:scaleX(0.752)">#77123298 sell 0.05</span>
<span class="t tl" style="left:12px;top:79px;transform:scaleX(0.752)">#77123300 sell 0.05</span>
<span class="t tl" style="left:12px;top:109px;transform:scaleX(0.799)">#77123312 tp</span>
<span class="t tl" style="left:12px;top:114px;transform:scaleX(0.799)">#77123300 tp</span>
<span class="t tl" style="left:12px;top:117px;transform:scaleX(0.799)">#77123298 tp</span>
<span class="t" style="left:231px;top:86px;font-size:11px;color:#c0392b;transform:scaleX(0.929)">Break Even Line</span>
<span class="t tl" style="left:919.5px;top:60.5px;font-size:9.5px;transform:scaleX(0.677)">ProController-V33</span>
<svg class="a" style="left:972.5px;top:60px" width="9" height="9"><circle cx="4.5" cy="4.5" r="3.7" fill="none" stroke="#444" stroke-width="0.8"/><path d="M2.8 5.6q1.7 1.4 3.4 0" fill="none" stroke="#444" stroke-width="0.7"/><circle cx="3.2" cy="3.4" r="0.55" fill="#444"/><circle cx="5.8" cy="3.4" r="0.55" fill="#444"/></svg>
<span class="t ax" style="left:988.5px;top:95.1px;transform:scaleX(0.753)">1.33895</span>
<span class="t ax" style="left:988.5px;top:68.1px;transform:scaleX(0.753)">1.34035</span>
<span class="t ax" style="left:988.5px;top:121.8px;transform:scaleX(0.753)">1.33755</span>
<span class="t ax" style="left:988.5px;top:148.1px;transform:scaleX(0.753)">1.33615</span>
<span class="t ax" style="left:988.5px;top:174.5px;transform:scaleX(0.753)">1.33475</span>
<span class="t ax" style="left:988.5px;top:200.8px;transform:scaleX(0.753)">1.33335</span>
<span class="t ax" style="left:988.5px;top:227.1px;transform:scaleX(0.753)">1.33195</span>
<span class="t ax" style="left:988.5px;top:253.5px;transform:scaleX(0.753)">1.33055</span>
<span class="t ax" style="left:988.5px;top:279.9px;transform:scaleX(0.753)">1.32915</span>
<span class="t ax" style="left:988.5px;top:306.2px;transform:scaleX(0.753)">1.32775</span>
<span class="t ax" style="left:988.5px;top:332.5px;transform:scaleX(0.753)">1.32635</span>
<span class="t ax" style="left:988.5px;top:358.8px;transform:scaleX(0.753)">1.32495</span>
<div class="a" style="left:985px;top:77px;width:29px;height:5.5px;background:#8a8a8a"></div>
<span class="t ax" style="left:987px;top:75.2px;color:#e8e8e8;transform:scaleX(0.768)">1.34000</span>
<div class="a" style="left:985px;top:82.5px;width:29px;height:6.5px;background:#b83232"></div>
<span class="t ax" style="left:987px;top:81.2px;color:#fff;transform:scaleX(0.768)">1.33973</span>
<div class="a" style="left:985px;top:99px;width:29px;height:6.5px;background:#000"></div>
<span class="t ax" style="left:987px;top:97.8px;color:#fff;transform:scaleX(0.768)">1.33882</span>
<div class="a" style="left:985px;top:265.5px;width:29px;height:6.5px;background:#7c7c7c"></div>
<span class="t ax" style="left:987px;top:264.2px;color:#fff;transform:scaleX(0.768)">1.33000</span>
<span class="t ax" style="left:8.0px;top:375.5px;transform:scaleX(0.754)">14 Oct 2025</span>
<span class="t ax" style="left:59.3px;top:375.5px;transform:scaleX(0.747)">14 Oct 15:10</span>
<span class="t ax" style="left:110.6px;top:375.5px;transform:scaleX(0.747)">14 Oct 17:10</span>
<span class="t ax" style="left:161.8px;top:375.5px;transform:scaleX(0.747)">14 Oct 19:10</span>
<span class="t ax" style="left:213.1px;top:375.5px;transform:scaleX(0.747)">14 Oct 21:10</span>
<span class="t ax" style="left:264.4px;top:375.5px;transform:scaleX(0.747)">14 Oct 23:10</span>
<span class="t ax" style="left:315.7px;top:375.5px;transform:scaleX(0.747)">15 Oct 01:10</span>
<span class="t ax" style="left:367.0px;top:375.5px;transform:scaleX(0.747)">15 Oct 03:10</span>
<span class="t ax" style="left:418.2px;top:375.5px;transform:scaleX(0.747)">15 Oct 05:10</span>
<span class="t ax" style="left:469.5px;top:375.5px;transform:scaleX(0.747)">15 Oct 07:10</span>
<span class="t ax" style="left:520.8px;top:375.5px;transform:scaleX(0.747)">15 Oct 09:10</span>
<span class="t ax" style="left:572.1px;top:375.5px;transform:scaleX(0.757)">15 Oct 11:10</span>
<span class="t ax" style="left:623.4px;top:375.5px;transform:scaleX(0.747)">15 Oct 13:10</span>
<span class="t ax" style="left:674.6px;top:375.5px;transform:scaleX(0.747)">15 Oct 15:10</span>
<span class="t ax" style="left:725.9px;top:375.5px;transform:scaleX(0.747)">15 Oct 17:10</span>
<span class="t ax" style="left:777.2px;top:375.5px;transform:scaleX(0.747)">15 Oct 19:10</span>
<div class="a" style="left:847px;top:72px;width:112px;height:119px;background:#e6e6e6;border:1px solid #6a6a6a;border-right-color:#c8c8c8;border-bottom-color:#c8c8c8"></div>
<div class="a" style="left:850px;top:75.5px;width:106px;height:17px;background:#b25ee4;border:1px dotted #d8b8f0"></div>
<span class="pt" style="left:857.5px;top:78.5px;font-size:12px;letter-spacing:0.6px;color:#f6eeff;text-shadow:0 0 1px #7a4a9a;transform:scaleX(0.899)">Pro Controller 改</span>
<div class="a" style="left:850px;top:95px;width:106px;height:17px;background:#b6e4e4;border:1px dotted #e0f4f4"></div>
<span class="pt" style="left:855px;top:97px;font-size:13px;font-weight:bold;color:#0000f2;transform:scaleX(1.022)">Total&nbsp;&nbsp; 27.2pips</span>
<div class="btn" style="left:850px;top:114px;width:106px;height:18.5px"></div>
<span class="pt" style="left:860px;top:117.5px;font-size:12px;transform:scaleX(1.024)">全通貨ペア決済</span>
<div class="btn" style="left:850px;top:135px;width:52px;height:17px"></div>
<div class="btn" style="left:904px;top:135px;width:52px;height:17px"></div>
<span class="pt" style="left:850.5px;top:138px;transform:scaleX(0.927)">現通貨決済</span>
<span class="pt" style="left:907px;top:138px;transform:scaleX(1.045)">自動決済</span>
<div class="btn" style="left:850px;top:155px;width:52px;height:15.5px"></div>
<div class="btn" style="left:904px;top:155px;width:52px;height:15.5px"></div>
<span class="pt" style="left:853px;top:157.5px;color:#555;transform:scaleX(0.990)">Pips 消去</span>
<span class="pt" style="left:907px;top:157.5px;transform:scaleX(1.045)">画面保存</span>
<div class="a" style="left:850px;top:173px;width:106px;height:15px;background:#d8d8d8;border:1px solid #ececec;border-right-color:#b8b8b8;border-bottom-color:#b8b8b8"></div>
<span class="pt" style="left:882px;top:175px;transform:scaleX(1.011)">x 閉じる</span>
<div class="box" style="left:850px;top:194px;width:32.5px;height:19.6px"></div>
<div class="a" style="left:849.5px;top:193.5px;width:2px;height:2px;background:#3050e0"></div>
<span class="bt" style="left:852px;top:196.8px;transform:scaleX(1.003)">11.5</span>
<div class="box" style="left:859px;top:215.3px;width:22.8px;height:19.3px"></div>
<div class="a" style="left:858.5px;top:214.8px;width:2px;height:2px;background:#3050e0"></div>
<span class="bt" style="left:861px;top:217.9px;transform:scaleX(0.882)">8.6</span>
<div class="box" style="left:861px;top:237.5px;width:23.4px;height:20.0px"></div>
<div class="a" style="left:860.5px;top:237.0px;width:2px;height:2px;background:#3050e0"></div>
<span class="bt" style="left:864px;top:240.5px;transform:scaleX(0.912)">7.1</span>
<svg class="a" style="left:850px;top:84px" width="106" height="3"><path d="M0 1.3H106" stroke="#a04848" stroke-width="0.9" stroke-dasharray="2 1.5"/></svg>
<div class="a" style="left:5px;top:387px;width:1014px;height:16px;background:#efefef"></div>
<span class="t" style="left:16px;top:389px;font-size:9.5px;color:#8a8a8a;transform:scaleX(0.783)">GBPUSD,Daily</span>
<span class="t" style="left:80px;top:389px;font-size:9.5px;color:#8a8a8a;transform:scaleX(0.747)">GBPUSD,H4</span>
<span class="t" style="left:135px;top:389px;font-size:9.5px;color:#8a8a8a;transform:scaleX(0.747)">GBPUSD,H1</span>
<div class="a" style="left:73px;top:390px;width:1px;height:9px;background:#a0a0a0"></div>
<div class="a" style="left:128px;top:390px;width:1px;height:9px;background:#a0a0a0"></div>
<div class="a" style="left:184px;top:386px;width:57px;height:14.5px;background:#fff;border:1px solid #7a7a7a;border-radius:0 0 2px 2px;border-bottom-width:1.5px"></div>
<span class="t" style="left:191px;top:389px;font-size:9.5px;color:#222;transform:scaleX(0.768)">GBPUSD,M5</span>
<svg class="a" style="left:995px;top:390px" width="20" height="8"><path d="M5 1v6l-3-3z" fill="#aaa"/><path d="M15 1v6l3-3z" fill="#999"/></svg>
<div class="a" style="left:5px;top:402px;width:1014px;height:1px;background:#d0d0d0"></div>
<div class="a" style="left:6px;top:403px;width:11px;height:108px;background:#f0f0f0"></div>
<div class="a" style="left:6.5px;top:413px;width:10px;height:97px;background:#d6e2ee"></div>
<svg class="a" style="left:7.5px;top:403.5px" width="7" height="7"><path d="M1.2 1.2l4.6 4.6M5.8 1.2l-4.6 4.6" stroke="#333" stroke-width="1.1"/></svg>
<span class="t" style="left:7px;top:510px;font-size:8.5px;color:#333;transform-origin:0 0;transform:rotate(-90deg) scaleX(0.72)">ターミナル</span>
<div class="a" style="left:16px;top:403px;width:1000px;height:94px;background:#fff;border-top:1px solid #dcdcdc"></div>
<div class="a" style="left:16px;top:496px;width:1000px;height:1.5px;background:#9a9a9a"></div>
<div class="a" style="left:16px;top:431.5px;width:1000px;height:13.5px;background:#ebebeb"></div>
<div class="a" style="left:16px;top:458px;width:1000px;height:13.5px;background:#c6c6c6"></div>
<div class="a" style="left:594px;top:445.5px;width:74px;height:11.5px;background:#5ee85e"></div>
<div class="a" style="left:16px;top:418px;width:1000px;height:1px;background:#e2e2e2"></div>
<div class="a" style="left:16px;top:431.5px;width:1000px;height:1px;background:#e2e2e2"></div>
<div class="a" style="left:16px;top:445px;width:1000px;height:1px;background:#e2e2e2"></div>
<div class="a" style="left:16px;top:458px;width:1000px;height:1px;background:#e2e2e2"></div>
<div class="a" style="left:114px;top:404px;width:1px;height:54px;background:#e0e0e0"></div>
<div class="a" style="left:252px;top:404px;width:1px;height:54px;background:#e0e0e0"></div>
<div class="a" style="left:320px;top:404px;width:1px;height:54px;background:#e0e0e0"></div>
<div class="a" style="left:373.5px;top:404px;width:1px;height:54px;background:#e0e0e0"></div>
<div class="a" style="left:441.5px;top:404px;width:1px;height:54px;background:#e0e0e0"></div>
<div class="a" style="left:517px;top:404px;width:1px;height:54px;background:#e0e0e0"></div>
<div class="a" style="left:593px;top:404px;width:1px;height:54px;background:#e0e0e0"></div>
<div class="a" style="left:668.7px;top:404px;width:1px;height:54px;background:#e0e0e0"></div>
<div class="a" style="left:744.3px;top:404px;width:1px;height:54px;background:#e0e0e0"></div>
<div class="a" style="left:819.6px;top:404px;width:1px;height:54px;background:#e0e0e0"></div>
<div class="a" style="left:895.6px;top:404px;width:1px;height:54px;background:#e0e0e0"></div>
<span class="t hd" style="left:20px;top:406px;transform:scaleX(0.944)">注文番号</span>
<span class="t hd" style="left:59px;top:407px;color:#aaa;font-size:7px">/</span>
<span class="t hd" style="right:775px;top:406px;transform-origin:100% 50%;;transform:scaleX(0.833)">時間</span>
<span class="t hd" style="right:707px;top:406px;transform-origin:100% 50%;;transform:scaleX(0.944)">取引種別</span>
<span class="t hd" style="right:654px;top:406px;transform-origin:100% 50%;;transform:scaleX(0.944)">数量</span>
<span class="t hd" style="right:586px;top:406px;transform-origin:100% 50%;;transform:scaleX(0.917)">通貨ペア</span>
<span class="t hd" style="right:510px;top:406px;transform-origin:100% 50%;;transform:scaleX(0.944)">価格</span>
<span class="t hd" style="right:434px;top:406px;transform-origin:100% 50%;;transform:scaleX(0.915)">決済逆指値(S/L)</span>
<span class="t hd" style="right:358px;top:406px;transform-origin:100% 50%;;transform:scaleX(0.875)">決済指値(T/P)</span>
<span class="t hd" style="right:283px;top:406px;transform-origin:100% 50%;;transform:scaleX(0.944)">価格</span>
<span class="t hd" style="right:207px;top:406px;transform-origin:100% 50%;;transform:scaleX(0.926)">手数料</span>
<span class="t hd" style="right:132px;top:406px;transform-origin:100% 50%;;transform:scaleX(0.694)">スワップ</span>
<span class="t hd" style="right:12px;top:406px;transform-origin:100% 50%;;transform:scaleX(0.944)">損益</span>
<svg class="a" style="left:18px;top:419.5px" width="11" height="12"><path d="M1.5 0.5h5l2.5 2.5v8.5h-7.5z" fill="#fafafa" stroke="#888" stroke-width="0.9"/><path d="M6.5 0.5v2.5h2.5" fill="none" stroke="#999" stroke-width="0.7"/><circle cx="6.8" cy="9" r="2.5" fill="#e24a1c"/><circle cx="6.2" cy="8.3" r="0.8" fill="#f8a080"/></svg>
<span class="t cell" style="left:31px;top:420.5px;transform:scaleX(0.899)">77123298</span>
<span class="t cell" style="right:775px;top:420.5px;transform-origin:100% 50%;;transform:scaleX(0.823)">2025.10.15 18:27:54</span>
<span class="t cell" style="right:707px;top:420.5px;transform-origin:100% 50%;;transform:scaleX(0.888)">sell</span>
<span class="t cell" style="right:654px;top:420.5px;transform-origin:100% 50%;;transform:scaleX(0.856)">0.05</span>
<span class="t cell" style="right:586px;top:420.5px;transform-origin:100% 50%;;transform:scaleX(0.813)">gbpusd</span>
<span class="t cell" style="right:510px;top:420.5px;transform-origin:100% 50%;;transform:scaleX(0.799)">1.33958</span>
<span class="t cell" style="right:434px;top:420.5px;transform-origin:100% 50%;;transform:scaleX(0.799)">1.34458</span>
<span class="t cell" style="right:358px;top:420.5px;transform-origin:100% 50%;;transform:scaleX(0.799)">1.33758</span>
<span class="t cell" style="right:283px;top:420.5px;transform-origin:100% 50%;;transform:scaleX(0.799)">1.33887</span>
<span class="t cell" style="right:207px;top:420.5px;transform-origin:100% 50%;;transform:scaleX(0.845)">-45</span>
<span class="t cell" style="right:132px;top:420.5px;transform-origin:100% 50%;;transform:scaleX(0.997)">0</span>
<span class="t cell" style="right:25px;top:420.5px;transform-origin:100% 50%;;transform:scaleX(0.798)">537</span>
<svg class="a" style="left:1004px;top:421.0px" width="9" height="9"><path d="M1 1l7 7M8 1l-7 7" stroke="#9a9a9a" stroke-width="0.9"/></svg>
<svg class="a" style="left:18px;top:432.8px" width="11" height="12"><path d="M1.5 0.5h5l2.5 2.5v8.5h-7.5z" fill="#fafafa" stroke="#888" stroke-width="0.9"/><path d="M6.5 0.5v2.5h2.5" fill="none" stroke="#999" stroke-width="0.7"/><circle cx="6.8" cy="9" r="2.5" fill="#e24a1c"/><circle cx="6.2" cy="8.3" r="0.8" fill="#f8a080"/></svg>
<span class="t cell" style="left:31px;top:433.8px;transform:scaleX(0.899)">77123300</span>
<span class="t cell" style="right:775px;top:433.8px;transform-origin:100% 50%;;transform:scaleX(0.823)">2025.10.15 18:41:09</span>
<span class="t cell" style="right:707px;top:433.8px;transform-origin:100% 50%;;transform:scaleX(0.888)">sell</span>
<span class="t cell" style="right:654px;top:433.8px;transform-origin:100% 50%;;transform:scaleX(0.856)">0.05</span>
<span class="t cell" style="right:586px;top:433.8px;transform-origin:100% 50%;;transform:scaleX(0.813)">gbpusd</span>
<span class="t cell" style="right:510px;top:433.8px;transform-origin:100% 50%;;transform:scaleX(0.799)">1.33973</span>
<span class="t cell" style="right:434px;top:433.8px;transform-origin:100% 50%;;transform:scaleX(0.799)">1.34473</span>
<span class="t cell" style="right:358px;top:433.8px;transform-origin:100% 50%;;transform:scaleX(0.799)">1.33773</span>
<span class="t cell" style="right:283px;top:433.8px;transform-origin:100% 50%;;transform:scaleX(0.799)">1.33887</span>
<span class="t cell" style="right:207px;top:433.8px;transform-origin:100% 50%;;transform:scaleX(0.845)">-45</span>
<span class="t cell" style="right:132px;top:433.8px;transform-origin:100% 50%;;transform:scaleX(0.997)">0</span>
<span class="t cell" style="right:25px;top:433.8px;transform-origin:100% 50%;;transform:scaleX(0.798)">650</span>
<svg class="a" style="left:1004px;top:434.3px" width="9" height="9"><path d="M1 1l7 7M8 1l-7 7" stroke="#9a9a9a" stroke-width="0.9"/></svg>
<svg class="a" style="left:18px;top:446.1px" width="11" height="12"><path d="M1.5 0.5h5l2.5 2.5v8.5h-7.5z" fill="#fafafa" stroke="#888" stroke-width="0.9"/><path d="M6.5 0.5v2.5h2.5" fill="none" stroke="#999" stroke-width="0.7"/><circle cx="6.8" cy="9" r="2.5" fill="#e24a1c"/><circle cx="6.2" cy="8.3" r="0.8" fill="#f8a080"/></svg>
<span class="t cell" style="left:31px;top:447.1px;transform:scaleX(0.899)">77123312</span>
<span class="t cell" style="right:775px;top:447.1px;transform-origin:100% 50%;;transform:scaleX(0.823)">2025.10.15 18:41:32</span>
<span class="t cell" style="right:707px;top:447.1px;transform-origin:100% 50%;;transform:scaleX(0.888)">sell</span>
<span class="t cell" style="right:654px;top:447.1px;transform-origin:100% 50%;;transform:scaleX(0.856)">0.05</span>
<span class="t cell" style="right:586px;top:447.1px;transform-origin:100% 50%;;transform:scaleX(0.813)">gbpusd</span>
<span class="t cell" style="right:510px;top:447.1px;transform-origin:100% 50%;;transform:scaleX(0.799)">1.34002</span>
<span class="t cell" style="right:434px;top:447.1px;transform-origin:100% 50%;;transform:scaleX(0.799)">1.34502</span>
<span class="t cell" style="right:358px;top:447.1px;transform-origin:100% 50%;;transform:scaleX(0.799)">1.33802</span>
<span class="t cell" style="right:283px;top:447.1px;transform-origin:100% 50%;;transform:scaleX(0.799)">1.33887</span>
<span class="t cell" style="right:207px;top:447.1px;transform-origin:100% 50%;;transform:scaleX(0.845)">-45</span>
<span class="t cell" style="right:132px;top:447.1px;transform-origin:100% 50%;;transform:scaleX(0.997)">0</span>
<span class="t cell" style="right:25px;top:447.1px;transform-origin:100% 50%;;transform:scaleX(0.798)">870</span>
<svg class="a" style="left:1004px;top:447.6px" width="9" height="9"><path d="M1 1l7 7M8 1l-7 7" stroke="#9a9a9a" stroke-width="0.9"/></svg>
<svg class="a" style="left:19px;top:460px" width="10" height="10"><rect x="0.5" y="0.5" width="9" height="9" fill="#fff" stroke="#999"/><path d="M5 2l3 3H6v3H4V5H2z" fill="#1a9a1a"/></svg>
<span class="t cell" style="left:31px;top:461px;color:#1a1a1a;-webkit-text-stroke:0.15px #1a1a1a;transform:scaleX(0.859)">残高: 230 103 JPY&nbsp; 有効証拠金: 232 025&nbsp; 必要証拠金: 6 075&nbsp; 余剰証拠金: 225 950&nbsp; 証拠金維持率: 3819.37%</span>
<span class="t cell" style="right:25px;top:461px;transform-origin:100% 50%;font-weight:bold;transform:scaleX(0.755)">1 922</span>
<div class="a" style="left:16px;top:497px;width:1000px;height:14px;background:#efefef"></div>
<div class="a" style="left:17px;top:496px;width:30px;height:14px;background:#fff;border:1px solid #8a8a8a;border-top:none"></div>
<span class="t" style="left:25px;top:499px;font-size:10px;color:#222;transform:scaleX(0.750)">取引</span>
<span class="t" style="left:54px;top:499px;font-size:10px;color:#8a8a8a;transform:scaleX(0.812)">運用比率</span>
<div class="a" style="left:92.4px;top:499px;width:1px;height:9px;background:#909090"></div>
<span class="t" style="left:99.7px;top:499px;font-size:10px;color:#8a8a8a;transform:scaleX(0.775)">口座履歴</span>
<div class="a" style="left:137.8px;top:499px;width:1px;height:9px;background:#909090"></div>
<span class="t" style="left:144.6px;top:499px;font-size:10px;color:#8a8a8a;transform:scaleX(0.562)">ニュース</span>
<div class="a" style="left:173px;top:499px;width:1px;height:9px;background:#909090"></div>
<span class="t" style="left:179.5px;top:499px;font-size:10px;color:#8a8a8a;transform:scaleX(0.658)">アラーム設定</span>
<div class="a" style="left:226.4px;top:499px;width:1px;height:9px;background:#909090"></div>
<span class="t" style="left:233px;top:499px;font-size:10px;color:#8a8a8a;transform:scaleX(0.614)">メールボックス</span>
<div class="a" style="left:286px;top:499px;width:1px;height:9px;background:#909090"></div>
<span class="t" style="left:294px;top:499px;font-size:10px;color:#8a8a8a;transform:scaleX(0.540)">マーケット</span>
<div class="a" style="left:327.5px;top:499px;width:1px;height:9px;background:#909090"></div>
<span class="t" style="left:333px;top:499px;font-size:10px;color:#8a8a8a;transform:scaleX(0.650)">シグナル</span>
<div class="a" style="left:367.5px;top:499px;width:1px;height:9px;background:#909090"></div>
<span class="t" style="left:372.5px;top:499px;font-size:10px;color:#8a8a8a;transform:scaleX(0.750)">記事</span>
<div class="a" style="left:395px;top:499px;width:1px;height:9px;background:#909090"></div>
<span class="t" style="left:402px;top:499px;font-size:10px;color:#8a8a8a;transform:scaleX(0.540)">ライブラリ</span>
<div class="a" style="left:436.5px;top:499px;width:1px;height:9px;background:#909090"></div>
<span class="t" style="left:443px;top:499px;font-size:10px;color:#8a8a8a;transform:scaleX(0.600)">エキスパート</span>
<div class="a" style="left:485px;top:499px;width:1px;height:9px;background:#909090"></div>
<span class="t" style="left:491px;top:499px;font-size:10px;color:#8a8a8a;transform:scaleX(0.787)">操作履歴</span>
<div class="a" style="left:530.5px;top:499px;width:1px;height:9px;background:#909090"></div>
<div class="a" style="left:277px;top:505px;width:3px;height:3px;border-radius:2px;background:#e04040"></div>
<div class="a" style="left:5px;top:511px;width:1014px;height:18px;background:#efefef;border-top:1px solid #e0e0e0"></div>
<span class="t" style="left:7px;top:519px;font-size:9px;color:#222;transform:scaleX(0.706)">F1キーでヘルプが表示されます</span>
<div class="a" style="left:541px;top:514px;width:1px;height:14px;background:#cfcfcf"></div>
<div class="a" style="left:620px;top:514px;width:1px;height:14px;background:#cfcfcf"></div>
<div class="a" style="left:690.5px;top:514px;width:1px;height:14px;background:#cfcfcf"></div>
<div class="a" style="left:737px;top:514px;width:1px;height:14px;background:#cfcfcf"></div>
<div class="a" style="left:785px;top:514px;width:1px;height:14px;background:#cfcfcf"></div>
<div class="a" style="left:830px;top:514px;width:1px;height:14px;background:#cfcfcf"></div>
<div class="a" style="left:876.5px;top:514px;width:1px;height:14px;background:#cfcfcf"></div>
<div class="a" style="left:921.5px;top:514px;width:1px;height:14px;background:#cfcfcf"></div>
<span class="t" style="left:543px;top:519px;font-size:9px;color:#222;transform:scaleX(0.789)">GBPUSD</span>
<svg class="a" style="left:925px;top:517px" width="16" height="9"><rect width="16" height="9" fill="#1a3c8c"/><path d="M0 9L16 0V9z" fill="#7ac03c"/><path d="M2 0v9M5 0v9M8 0v9M11 0v9M14 0v9" stroke="#fff" stroke-width="0.6" opacity="0.6"/></svg>
<span class="t" style="left:944px;top:519px;font-size:9px;color:#222;transform:scaleX(0.910)">6255/8 kb</span>
<div class="a" id="lstrip"></div>
<div class="a" id="rstrip"></div>
<div class="a" id="bstrip"></div>
</body></html>
